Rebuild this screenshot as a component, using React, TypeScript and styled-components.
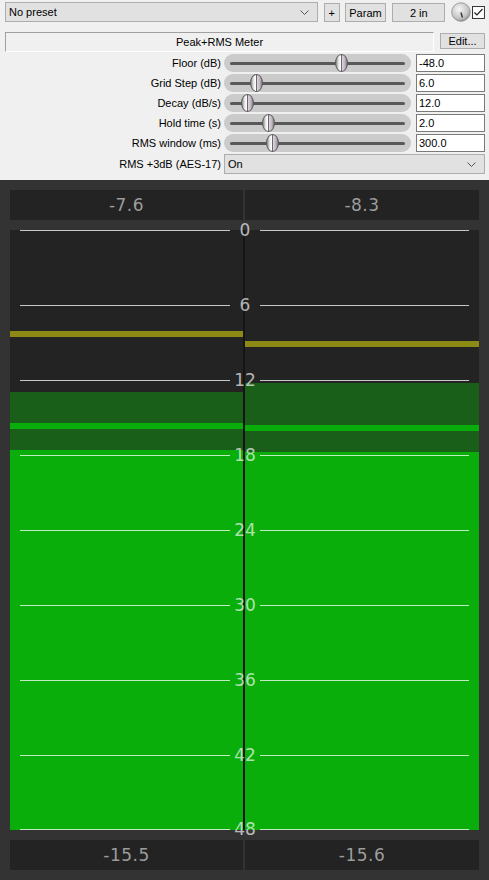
import styled, {createGlobalStyle} from "styled-components";

const GlobalStyle = createGlobalStyle`
  html, body {
    margin: 0;
    padding: 0;
  }
  body {
    background: #f0f0f0;
    font-family: "Liberation Sans", Arial, sans-serif;
    font-size: 11px;
    color: #000;
  }
`;

const Page = styled.div`
  width: 489px;
  height: 880px;
  display: flex;
  flex-direction: column;
  overflow: hidden;
`;

const Controls = styled.div`
  height: 180px;
  box-sizing: border-box;
  padding: 2px 4px 0 5px;
  display: flex;
  flex-direction: column;
`;

const Row = styled.div<{ $mt?: number }>`
  display: flex;
  align-items: center;
  height: 20px;
  margin-top: ${p => p.$mt ?? 0}px;
`;

const Select = styled.div<{ $w: number; $ml?: number }>`
  width: ${p => p.$w}px;
  margin-left: ${p => p.$ml ?? 0}px;
  height: 20px;
  box-sizing: border-box;
  border: 1px solid #adadad;
  background: #e1e1e1;
  display: flex;
  align-items: center;
  justify-content: space-between;
  padding: 0 8px 0 3px;
`;

const Button = styled.div<{ $w: number; $ml?: number; $h?: number }>`
  width: ${p => p.$w}px;
  height: ${p => p.$h ?? 19}px;
  margin-left: ${p => p.$ml ?? 0}px;
  box-sizing: border-box;
  border: 1px solid #adadad;
  background: #e1e1e1;
  display: flex;
  align-items: center;
  justify-content: center;
  align-self: flex-start;
  margin-top: 1px;
`;

const TitleBox = styled.div`
  width: 429px;
  height: 20px;
  box-sizing: border-box;
  border-top: 1px solid #a0a0a0;
  border-left: 1px solid #a0a0a0;
  border-bottom: 1px solid #fff;
  border-right: 1px solid #fff;
  display: flex;
  align-items: center;
  justify-content: center;
`;

const Label = styled.div`
  width: 216px;
  text-align: right;
  white-space: nowrap;
`;

const Pill = styled.div`
  position: relative;
  width: 187px;
  height: 18px;
  margin-left: 3px;
  border-radius: 9px;
  background: #cbcbcb;
`;

const Track = styled.div`
  position: absolute;
  left: 6px;
  right: 6px;
  top: 8px;
  height: 3px;
  border-radius: 2px;
  background: #595959;
`;

const Thumb = styled.div`
  position: absolute;
  top: 0;
  width: 13px;
  height: 18px;
  box-sizing: border-box;
  border: 1px solid #5c5c5c;
  border-radius: 50%;
  background: linear-gradient(90deg, #8a8a8a 0%, #e8e8e8 25%, #ffffff 42%, #6a6a6a 50%, #d8d0d8 58%, #c4b4c4 80%, #7a7a7a 100%);
`;

const ValueBox = styled.div`
  width: 69px;
  height: 18px;
  margin-left: 5px;
  box-sizing: border-box;
  border: 1px solid #7a7a7a;
  background: #fff;
  padding-left: 2px;
  display: flex;
  align-items: center;
`;

const Dark = styled.div`
  flex: 1;
  background: #333333;
  padding: 10px;
  display: flex;
  flex-direction: column;
  gap: 10px;
`;

const ReadoutRow = styled.div`
  display: grid;
  grid-template-columns: 233px 234px;
  column-gap: 2px;
  height: 30px;
`;

const Readout = styled.div`
  background: #232323;
  color: #9c9c9c;
  font-family: "DejaVu Sans", Verdana, sans-serif;
  font-size: 17px;
  letter-spacing: 0.5px;
  display: flex;
  align-items: center;
  justify-content: center;
`;

const Meter = styled.div`
  position: relative;
  height: 600px;
  display: grid;
  grid-template-columns: 233px 234px;
  column-gap: 2px;
  background: #151515;
`;

const Channel = styled.div`
  position: relative;
  background: #232323;
  overflow: hidden;
`;

const Band = styled.div<{ $color: string }>`
  position: absolute;
  left: 0;
  right: 0;
  background: ${p => p.$color};
`;

const Tick = styled.div`
  position: absolute;
  left: 10px;
  right: 10px;
  height: 0;
  display: flex;
  align-items: center;
`;

const TickLine = styled.div<{ $w?: number }>`
  height: 1px;
  background: rgba(255, 255, 255, 0.75);
  ${p => p.$w ? `width: ${p.$w}px;` : "flex: 1;"}
`;

const TickLabel = styled.div`
  width: 30px;
  text-align: center;
  color: rgba(255, 255, 255, 0.68);
  font-family: "DejaVu Sans", Verdana, sans-serif;
  font-size: 17px;
  line-height: 20px;
`;

const Chevron = () => (
    <svg width="9" height="5" viewBox="0 0 9 5">
        <polyline points="0.5,0.5 4.5,4.5 8.5,0.5" fill="none" stroke="#555" strokeWidth="1"/>
    </svg>
);

const Knob = () => (
    <svg width="20" height="20" viewBox="0 0 20 20" style={{marginLeft: 6}}>
        <defs>
            <radialGradient id="kg" cx="40%" cy="35%" r="70%">
                <stop offset="0%" stopColor="#f6f6f6"/>
                <stop offset="70%" stopColor="#c4c4c4"/>
                <stop offset="100%" stopColor="#8c8c8c"/>
            </radialGradient>
        </defs>
        <circle cx="10" cy="10" r="9.3" fill="url(#kg)" stroke="#8a8a8a" strokeWidth="0.8"/>
        <line x1="10" y1="10.5" x2="11.5" y2="15.5" stroke="#333" strokeWidth="1.4"/>
    </svg>
);

const Checkbox = () => (
    <svg width="13" height="13" viewBox="0 0 13 13" style={{marginLeft: 1}}>
        <rect x="0.5" y="0.5" width="12" height="12" fill="#fff" stroke="#333"/>
        <polyline points="2.5,6.5 5,9 10.5,3" fill="none" stroke="#222" strokeWidth="1.2"/>
    </svg>
);

const sliders = [
    {label: "Floor (dB)", value: "-48.0", pos: 117},
    {label: "Grid Step (dB)", value: "6.0", pos: 32},
    {label: "Decay (dB/s)", value: "12.0", pos: 23},
    {label: "Hold time (s)", value: "2.0", pos: 44},
    {label: "RMS window (ms)", value: "300.0", pos: 48},
];

const channels = [
    {peak: "-7.6", rms: "-15.5", hold: 101, zone: 162, stripe: 193, fill: 220},
    {peak: "-8.3", rms: "-15.6", hold: 111, zone: 153, stripe: 195, fill: 222},
];

const ticks = [0, 6, 12, 18, 24, 30, 36, 42, 48];

export default function App() {
    return (
        <>
            <GlobalStyle/>
            <Page>
                <Controls>
                    <Row>
                        <Select $w={314}>No preset<Chevron/></Select>
                        <Button $w={16} $ml={6}>+</Button>
                        <Button $w={42} $ml={5}>Param</Button>
                        <Button $w={53} $ml={6}>2 in</Button>
                        <Knob/>
                        <Checkbox/>
                    </Row>
                    <Row $mt={10}>
                        <TitleBox>Peak+RMS Meter</TitleBox>
                        <Button $w={45} $ml={6} $h={16}>Edit...</Button>
                    </Row>
                    <div style={{marginTop: 1}}>
                        {sliders.map(s => (
                            <Row key={s.label}>
                                <Label>{s.label}</Label>
                                <Pill>
                                    <Track/>
                                    <Thumb style={{left: s.pos - 6}}/>
                                </Pill>
                                <ValueBox>{s.value}</ValueBox>
                            </Row>
                        ))}
                    </div>
                    <Row $mt={1}>
                        <Label>RMS +3dB (AES-17)</Label>
                        <Select $w={261} $ml={3}>On<Chevron/></Select>
                    </Row>
                </Controls>
                <Dark>
                    <ReadoutRow>
                        {channels.map(c => <Readout key={c.peak}>{c.peak}</Readout>)}
                    </ReadoutRow>
                    <Meter>
                        {channels.map(c => (
                            <Channel key={c.peak}>
                                <Band $color="#8c8a14" style={{top: c.hold, height: 6}}/>
                                <Band $color="#1a5f19" style={{top: c.zone, height: c.fill - c.zone}}/>
                                <Band $color="#0aae0a" style={{top: c.stripe, height: 6}}/>
                                <Band $color="#0aae0a" style={{top: c.fill, bottom: 0}}/>
                            </Channel>
                        ))}
                        {ticks.map((t, i) => (
                            <Tick key={t} style={{top: i * 75 - (i === 8 ? 1 : 0)}}>
                                <TickLine $w={210}/>
                                <TickLabel>{t}</TickLabel>
                                <TickLine/>
                            </Tick>
                        ))}
                    </Meter>
                    <ReadoutRow>
                        {channels.map(c => <Readout key={c.rms}>{c.rms}</Readout>)}
                    </ReadoutRow>
                </Dark>
            </Page>
        </>
    );
}
